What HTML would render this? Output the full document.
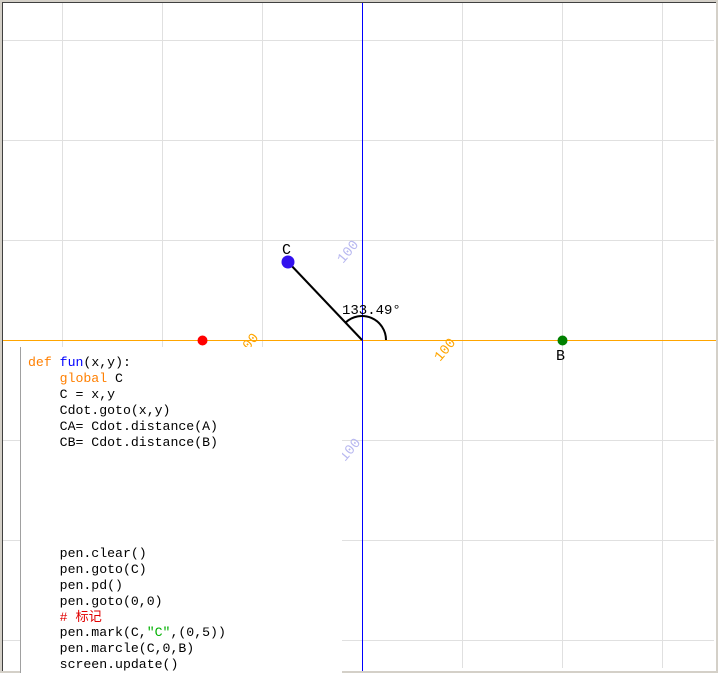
<!DOCTYPE html>
<html><head><meta charset="utf-8"><style>
html,body{margin:0;padding:0;width:718px;height:673px;overflow:hidden;background:#d4d0c8}
#f{position:absolute;left:0;top:0}
#code{position:absolute;left:20px;top:347px;width:322px;height:326px;background:#fff;border-left:1px solid #a0a0a0;font-family:"Liberation Mono","Noto Sans CJK SC",monospace;font-size:13.2px;line-height:15.9px;color:#000;white-space:pre;padding:8px 0 0 7px;box-sizing:border-box}
.k{color:#ff7f00}.b{color:#0000ff}.r{color:#e00000}.g{color:#00b000}
</style></head><body>
<svg id="f" width="718" height="673" xmlns="http://www.w3.org/2000/svg">
<rect x="0" y="0" width="718" height="673" fill="#d4d0c8"/>
<rect x="2" y="2" width="714" height="669" fill="#fff"/>
<line x1="2.5" y1="2" x2="2.5" y2="671" stroke="#404040"/>
<line x1="2" y1="2.5" x2="716" y2="2.5" stroke="#404040"/>
<g stroke="#e0e0e0" stroke-width="1">
<line x1="62.5" y1="3" x2="62.5" y2="668"/><line x1="162.5" y1="3" x2="162.5" y2="668"/><line x1="262.5" y1="3" x2="262.5" y2="668"/><line x1="462.5" y1="3" x2="462.5" y2="668"/><line x1="562.5" y1="3" x2="562.5" y2="668"/><line x1="662.5" y1="3" x2="662.5" y2="668"/>
<line x1="3" y1="40.5" x2="714" y2="40.5"/><line x1="3" y1="140.5" x2="714" y2="140.5"/><line x1="3" y1="240.5" x2="714" y2="240.5"/><line x1="3" y1="440.5" x2="714" y2="440.5"/><line x1="3" y1="540.5" x2="714" y2="540.5"/><line x1="3" y1="640.5" x2="714" y2="640.5"/>
</g>
<line x1="3" y1="340.5" x2="716" y2="340.5" stroke="#ffa500"/>
<line x1="362.5" y1="3" x2="362.5" y2="671" stroke="#0000ff"/>
<g font-family="Liberation Mono,monospace" font-size="14">
<text x="0" y="0" fill="#b8b8f0" transform="translate(343,264) rotate(-50)">100</text>
<text x="0" y="0" fill="#b8b8f0" transform="translate(345,462) rotate(-50)">100</text>
<text x="0" y="0" fill="#ffa500" transform="translate(440,362) rotate(-50)">100</text>
<text x="0" y="0" fill="#ffa500" transform="translate(243,357) rotate(-50)">100</text>
</g>
<line x1="288" y1="262" x2="362" y2="340" stroke="#000" stroke-width="2"/>
<path d="M386 340 A24 24 0 0 0 345.5 322.6" fill="none" stroke="#000" stroke-width="2"/>
<circle cx="202.5" cy="340.5" r="5" fill="#ff0000"/>
<circle cx="562.5" cy="340.5" r="5" fill="#008000"/>
<circle cx="288" cy="262" r="6.5" fill="#3311ee"/>
<g font-family="Liberation Mono,monospace" font-size="15" fill="#000">
<text x="282" y="254">C</text>
<text x="556" y="360">B</text>
<text x="342" y="314" font-size="14">133.49°</text>
</g>
</svg>
<div id="code"><span class="k">def</span> <span class="b">fun</span>(x,y):
    <span class="k">global</span> C
    C = x,y
    Cdot.goto(x,y)
    CA= Cdot.distance(A)
    CB= Cdot.distance(B)






    pen.clear()
    pen.goto(C)
    pen.pd()
    pen.goto(0,0)
    <span class="r"># 标记</span>
    pen.mark(C,<span class="g">"C"</span>,(0,5))
    pen.marcle(C,0,B)
    screen.update()</div>
</body></html>
